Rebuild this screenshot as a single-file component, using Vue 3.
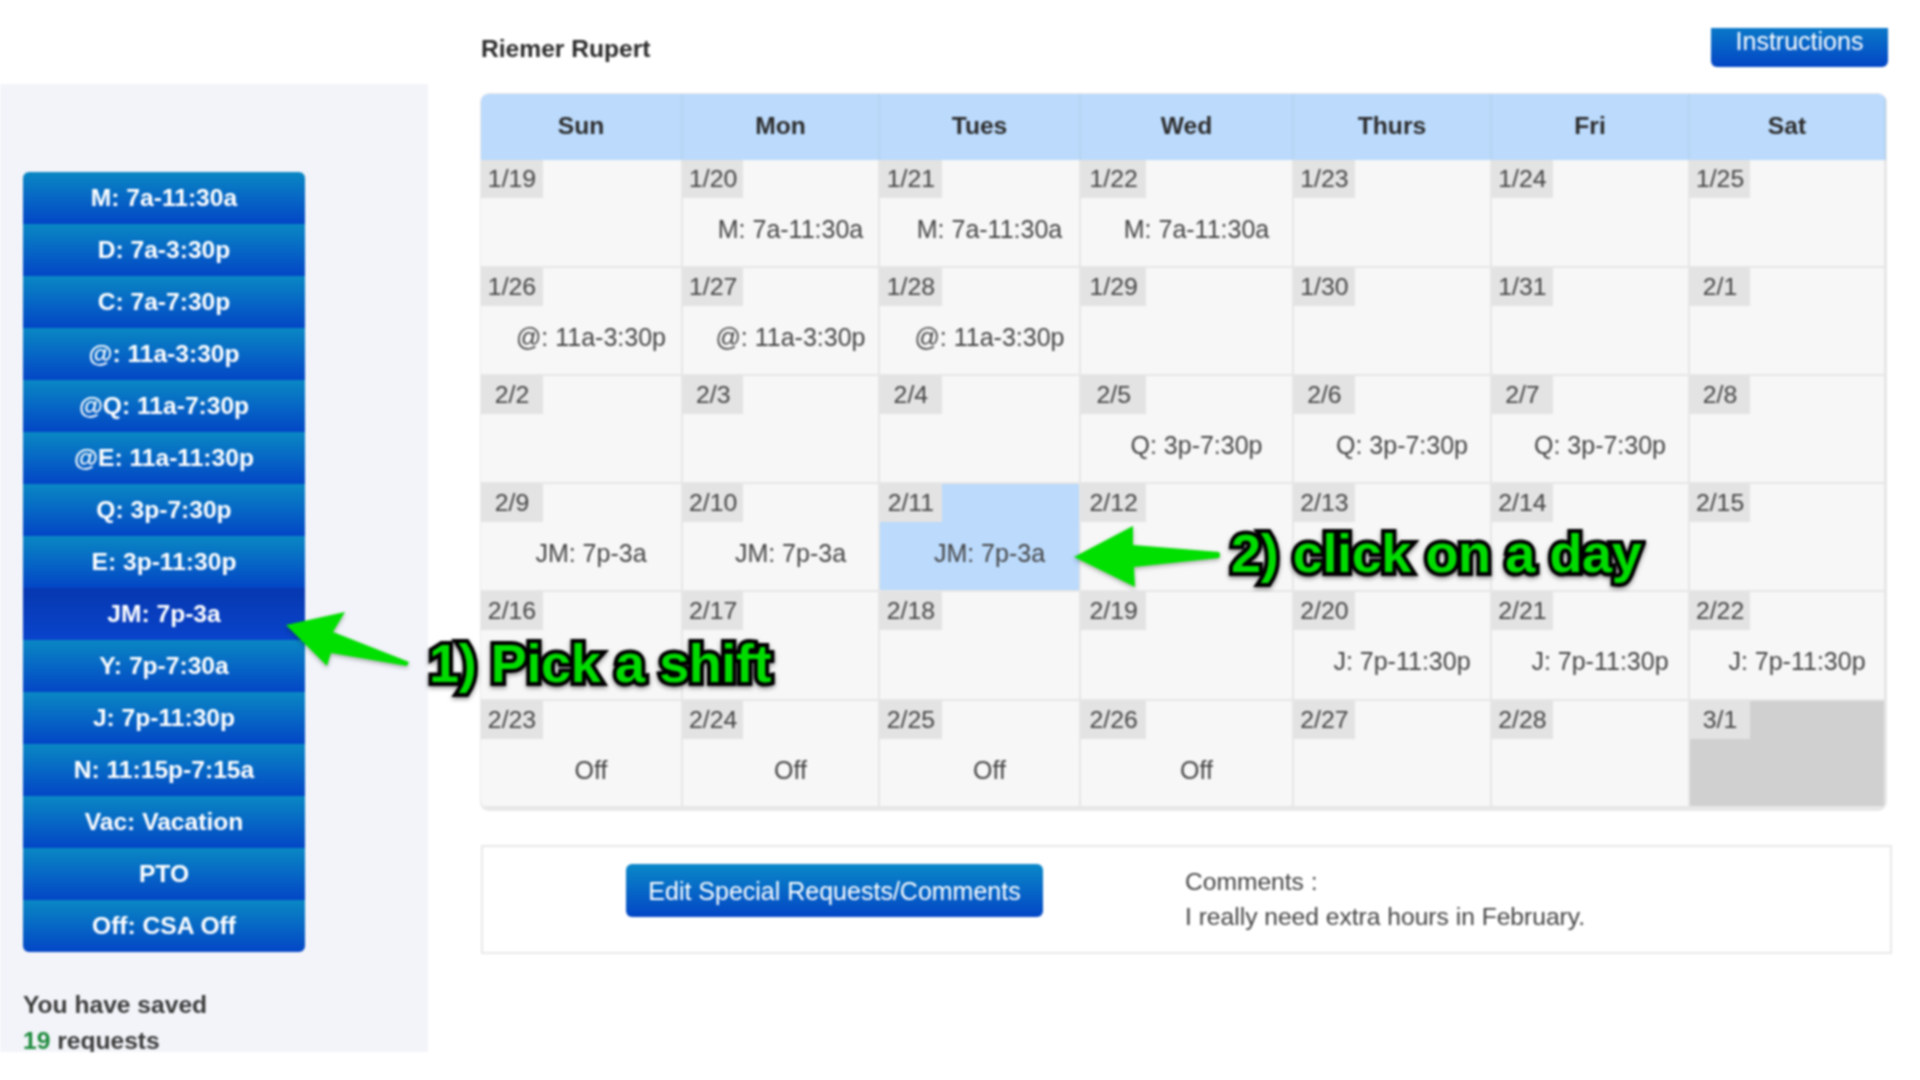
<script setup>
const shifts = ['M: 7a-11:30a','D: 7a-3:30p','C: 7a-7:30p','@: 11a-3:30p','@Q: 11a-7:30p','@E: 11a-11:30p','Q: 3p-7:30p','E: 3p-11:30p','JM: 7p-3a','Y: 7p-7:30a','J: 7p-11:30p','N: 11:15p-7:15a','Vac: Vacation','PTO','Off: CSA Off']
const days = ['Sun','Mon','Tues','Wed','Thurs','Fri','Sat']
const weeks = [
  [['1/19',''],['1/20','M: 7a-11:30a'],['1/21','M: 7a-11:30a'],['1/22','M: 7a-11:30a'],['1/23',''],['1/24',''],['1/25','']],
  [['1/26','@: 11a-3:30p'],['1/27','@: 11a-3:30p'],['1/28','@: 11a-3:30p'],['1/29',''],['1/30',''],['1/31',''],['2/1','']],
  [['2/2',''],['2/3',''],['2/4',''],['2/5','Q: 3p-7:30p'],['2/6','Q: 3p-7:30p'],['2/7','Q: 3p-7:30p'],['2/8','']],
  [['2/9','JM: 7p-3a'],['2/10','JM: 7p-3a'],['2/11','JM: 7p-3a','sel'],['2/12',''],['2/13',''],['2/14',''],['2/15','']],
  [['2/16',''],['2/17',''],['2/18',''],['2/19',''],['2/20','J: 7p-11:30p'],['2/21','J: 7p-11:30p'],['2/22','J: 7p-11:30p']],
  [['2/23','Off'],['2/24','Off'],['2/25','Off'],['2/26','Off'],['2/27',''],['2/28',''],['3/1','','out']]
]
const cells = weeks.flat()
</script>

<template>
  <div class="page">
    <aside class="side">
      <div class="shifts">
        <div v-for="s in shifts" :key="s" class="shift" :class="{ active: s === 'JM: 7p-3a' }">{{ s }}</div>
      </div>
      <div class="saved">
        <div>You have saved</div>
        <div><span class="num">19</span> requests</div>
      </div>
    </aside>
    <main class="main">
      <header class="top">
        <div class="name">Riemer Rupert</div>
        <div class="instr">Instructions</div>
      </header>
      <section class="cal">
        <div v-for="d in days" :key="d" class="head">{{ d }}</div>
        <div v-for="c in cells" :key="c[0]" class="cell" :class="c[2]">
          <div class="date">{{ c[0] }}</div>
          <div class="val">{{ c[1] }}</div>
        </div>
      </section>
      <section class="box">
        <div class="edit">Edit Special Requests/Comments</div>
        <div class="comments">
          <div>Comments :</div>
          <div>I really need extra hours in February.</div>
        </div>
      </section>
    </main>

    <svg class="arrow a1" viewBox="0 0 140 70" width="140" height="70">
      <path d="M4 28 L63 15 L51 35 L127 65 L125 69 L49 56 L45 69 Z" fill="#00e000" />
    </svg>
    <svg class="arrow a2" viewBox="0 0 160 70" width="160" height="70">
      <path d="M4 36 L63 5 L63 24 L149 31 Q151 34 149 37 L64 46 L65 66 Z" fill="#00e000" />
    </svg>
    <div class="note n1">1) Pick a shift</div>
    <div class="note n2">2) click on a day</div>
  </div>
</template>

<style scoped>
.page {
  position: relative;
  display: flex;
  align-items: flex-start;
  width: 1920px;
  height: 1080px;
  overflow: hidden;
  background: #fff;
  color: #3c3c3c;
  font-family: "Liberation Sans", Arial, sans-serif;
  font-size: 24.6px;
  filter: blur(0.9px);
}
.side {
  box-sizing: border-box;
  flex: none;
  width: 428px;
  height: 968px;
  margin-top: 84px;
  padding: 88px 0 0 23px;
  background: #f2f4f9;
  overflow: hidden;
}
.shifts {
  width: 282px;
  border-radius: 6px;
  overflow: hidden;
}
.shift {
  height: 52px;
  line-height: 52px;
  text-align: center;
  color: #fff;
  font-weight: 700;
  background: linear-gradient(#0a88c4, #0346c6);
}
.shift.active {
  background: linear-gradient(#0638b0, #0a44cc);
}
.saved {
  margin-top: 35px;
  line-height: 35.5px;
  font-weight: 700;
  color: #3c3c3c;
}
.num { color: #1d8a3c; }
.main {
  flex: none;
  width: 1411px;
  margin-left: 53px;
}
.top {
  box-sizing: border-box;
  display: flex;
  justify-content: space-between;
  align-items: flex-start;
  height: 94px;
  padding: 28px 4px 0 0;
}
.name {
  line-height: 42px;
  font-weight: 700;
  color: #2c2c2c;
}
.instr {
  width: 177px;
  height: 39px;
  line-height: 26px;
  font-size: 25px;
  text-align: center;
  color: #fff;
  border-radius: 0 0 6px 6px;
  background: linear-gradient(#0a78c8, #0346c6);
}
.cal {
  display: grid;
  grid-template-columns: 202px 197px 201px 213px 198px 198px 196px;
  grid-template-rows: 66px 108px 108px 108px 108px 109px 107px;
  width: 1405px;
  border-radius: 8px;
  overflow: hidden;
  box-shadow: 0 0 0 1px #e8e8e8, 0 2px 0 1px #e8e8e8;
}
.head {
  line-height: 64px;
  text-align: center;
  font-weight: 700;
  color: #2c2c2c;
  background: #bbdafc;
  border-right: 2px solid #b6d3f0;
}
.head:last-of-type { border-right: 0; }
.cell {
  box-sizing: border-box;
  min-width: 0;
  background: #f7f7f7;
  border-right: 2px solid #e6e6e6;
  border-bottom: 2px solid #e6e6e6;
}
.cell.sel { background: #bbdafc; }
.cell.out { background: #d0d0d0; }
.date {
  width: 31%;
  height: 38px;
  line-height: 37px;
  font-size: 24.8px;
  text-align: center;
  background: #e3e3e3;
  color: #444;
}
.val {
  padding: 14px 0 0 20px;
  line-height: 34px;
  min-height: 34px;
  font-size: 25px;
  text-align: center;
  white-space: nowrap;
  color: #444;
}
.box {
  box-sizing: border-box;
  display: flex;
  align-items: flex-start;
  width: 1411px;
  height: 109px;
  margin-top: 37px;
  padding: 17px 0 0 143px;
  border: 2px solid #e8e8e8;
  background: #fff;
}
.edit {
  width: 417px;
  height: 53px;
  line-height: 54px;
  font-size: 25px;
  text-align: center;
  color: #fff;
  border-radius: 6px;
  background: linear-gradient(#0a88c8, #0346c6);
}
.comments {
  margin-left: 142px;
  line-height: 35px;
  color: #444;
}
.arrow {
  position: absolute;
  filter: drop-shadow(0 2px 2px rgba(0,0,0,.3));
}
.a1 { left: 282px; top: 597px; }
.a2 { left: 1070px; top: 521px; }
.note {
  position: absolute;
  font-size: 54px;
  font-weight: 700;
  letter-spacing: -0.4px;
  line-height: 64px;
  color: #00dc00;
  white-space: nowrap;
  -webkit-text-stroke: 8px #000;
  paint-order: stroke fill;
  filter: drop-shadow(0 2px 2px rgba(0,0,0,.45));
}
.n1 { left: 429px; top: 631px; }
.n2 { left: 1231px; top: 521px; }
</style>

<style>
html, body { margin: 0; background: #fff; }
</style>
